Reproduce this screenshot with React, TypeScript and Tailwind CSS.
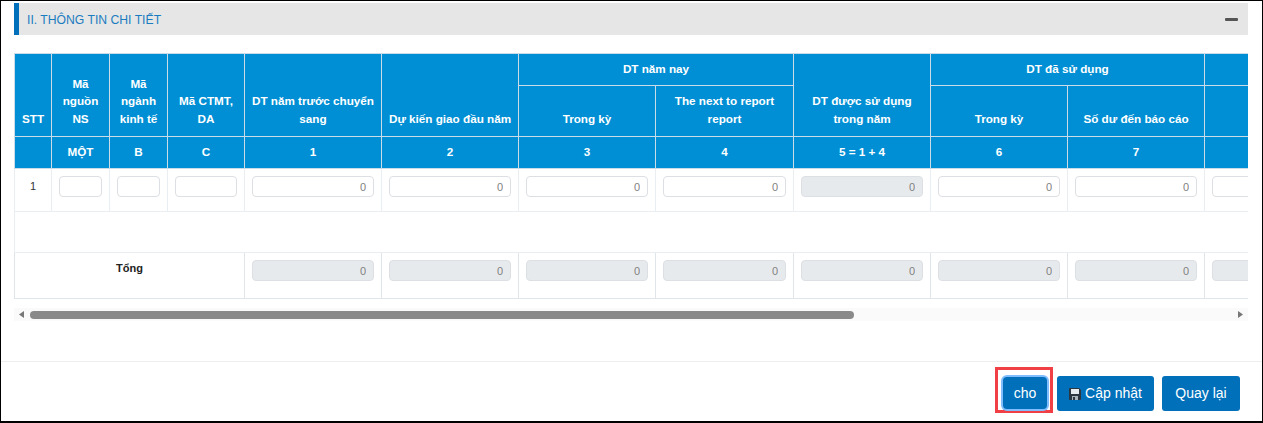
import React from "react";

const th = "border border-[#c9dce8] bg-[#008fd5] text-white font-bold text-[11.7px] leading-[17.5px] text-center px-1";
const thB = th + " align-bottom pb-[9px]";
const thC = th + " pb-[2px]";
const td = "border border-[#e9eef2] align-top px-[7px] pt-[7px] pb-0";

function Num({ off = false }: { off?: boolean }) {
  return (
    <input
      readOnly
      defaultValue="0"
      className={`block w-full h-[21px] rounded-[4px] border border-[#dcdfe3] text-right pr-[7px] text-[11px] text-[#808080] outline-none opacity-[.99] ${off ? "bg-[#e7eaed]" : "bg-white"}`}
    />
  );
}

function Empty() {
  return <input readOnly className="block w-full h-[21px] rounded-[4px] border border-[#dcdfe3] bg-white outline-none" />;
}

const widths = [37, 58, 58, 77, 137, 137, 137, 138, 137, 137, 137, 137];

export default function App() {
  return (
    <div className="w-[1263px] h-[423px] box-border border-l border-t border-r border-b-2 border-black bg-white flex flex-col overflow-hidden font-['Liberation_Sans',Arial,sans-serif]">
      <div className="ml-[13px] mr-[14px] mt-[2px] h-[32px] shrink-0 bg-[#e6e6e6] border-l-[5px] border-[#0070ba] flex items-center justify-between pl-[8px] pr-[10px]">
        <span className="text-[12.2px] text-[#1b7cc0] mt-[2px]">II. THÔNG TIN CHI TIẾT</span>
        <span className="w-[13px] h-[3px] bg-[#555] rounded-[1px]" />
      </div>

      <div className="ml-[13px] mr-[14px] mt-[18px] overflow-hidden shrink-0">
        <table className="table-fixed border-collapse w-[1327px]">
          <colgroup>
            {widths.map((w, i) => (
              <col key={i} style={{ width: w }} />
            ))}
          </colgroup>
          <thead>
            <tr className="h-[32px]">
              <th rowSpan={2} className={thB}>STT</th>
              <th rowSpan={2} className={thB}>Mã nguồn NS</th>
              <th rowSpan={2} className={thB}>Mã ngành kinh tế</th>
              <th rowSpan={2} className={thB}>Mã CTMT, DA</th>
              <th rowSpan={2} className={thB}>DT năm trước chuyển sang</th>
              <th rowSpan={2} className={thB}>Dự kiến giao đầu năm</th>
              <th colSpan={2} className={thC}>DT năm nay</th>
              <th rowSpan={2} className={thB}>DT được sử dụng trong năm</th>
              <th colSpan={2} className={thC}>DT đã sử dụng</th>
              <th className={th}></th>
            </tr>
            <tr className="h-[51px]">
              <th className={thB}>Trong kỳ</th>
              <th className={thB}>The next to report report</th>
              <th className={thB}>Trong kỳ</th>
              <th className={thB}>Số dư đến báo cáo</th>
              <th className={th}></th>
            </tr>
            <tr className="h-[32px]">
              {["", "MỘT", "B", "C", "1", "2", "3", "4", "5 = 1 + 4", "6", "7", ""].map((t, i) => (
                <th key={i} className={thC}>{t}</th>
              ))}
            </tr>
          </thead>
          <tbody>
            <tr className="h-[43px]">
              <td className="border border-[#e9eef2] align-top text-center text-[11px] text-[#333] pt-[9px]">1</td>
              <td className={td}><Empty /></td>
              <td className={td}><Empty /></td>
              <td className={td}><Empty /></td>
              <td className={td}><Num /></td>
              <td className={td}><Num /></td>
              <td className={td}><Num /></td>
              <td className={td}><Num /></td>
              <td className={td}><Num off /></td>
              <td className={td}><Num /></td>
              <td className={td}><Num /></td>
              <td className={td}><Num /></td>
            </tr>
            <tr className="h-[41px]">
              <td colSpan={12} className="border border-[#e9eef2]"></td>
            </tr>
            <tr className="h-[46px]">
              <td colSpan={4} className="border border-[#e0e5e9] align-top text-center text-[11px] font-bold text-[#222] pt-[7px]">Tổng</td>
              {Array.from({ length: 8 }).map((_, i) => (
                <td key={i} className="border border-[#e0e5e9] align-top px-[7px] pt-[7px]"><Num off /></td>
              ))}
            </tr>
          </tbody>
        </table>
      </div>

      <div className="ml-[13px] mr-[14px] mt-[9px] h-[13px] shrink-0 bg-[#fafafa] flex items-center">
        <svg width="16" height="13" viewBox="0 0 16 13" className="shrink-0">
          <path d="M5 6.5 10 3v7z" fill="#777" />
        </svg>
        <div className="h-[8px] w-[824px] rounded-[4px] bg-[#8a8a8a]" />
        <div className="flex-1" />
        <svg width="16" height="13" viewBox="0 0 16 13" className="shrink-0">
          <path d="M11 6.5 6 3v7z" fill="#777" />
        </svg>
      </div>

      <div className="mt-[40px] border-t border-[#eceeef] flex-1 flex items-start justify-end pr-[22px] pt-[14px] relative">
        <div className="absolute left-[994px] top-[5px] w-[58px] h-[46px] border-[3px] border-[#f04046]" />
        <button className="relative w-[44px] h-[32px] mt-[1px] mr-[10px] rounded-[4px] bg-[#0070ba] text-white text-[14px] ring-[2px] ring-[#80bdff]">cho</button>
        <button className="w-[97px] h-[35px] mr-[8px] rounded-[3px] bg-[#0070ba] text-white text-[14px] flex items-center justify-center gap-[4px]">
          <svg width="12" height="12" viewBox="0 0 12 12">
            <path d="M0 1a1 1 0 0 1 1-1h9l2 2v9a1 1 0 0 1-1 1H1a1 1 0 0 1-1-1z" fill="#2b3640" />
            <rect x="2" y="1" width="8" height="5" fill="#e6ebef" />
            <rect x="3" y="8" width="6" height="4" fill="#aab4bd" />
            <rect x="4" y="9" width="2" height="3" fill="#2b3640" />
          </svg>
          Cập nhật
        </button>
        <button className="w-[78px] h-[35px] rounded-[3px] bg-[#0070ba] text-white text-[14px]">Quay lại</button>
      </div>
    </div>
  );
}
